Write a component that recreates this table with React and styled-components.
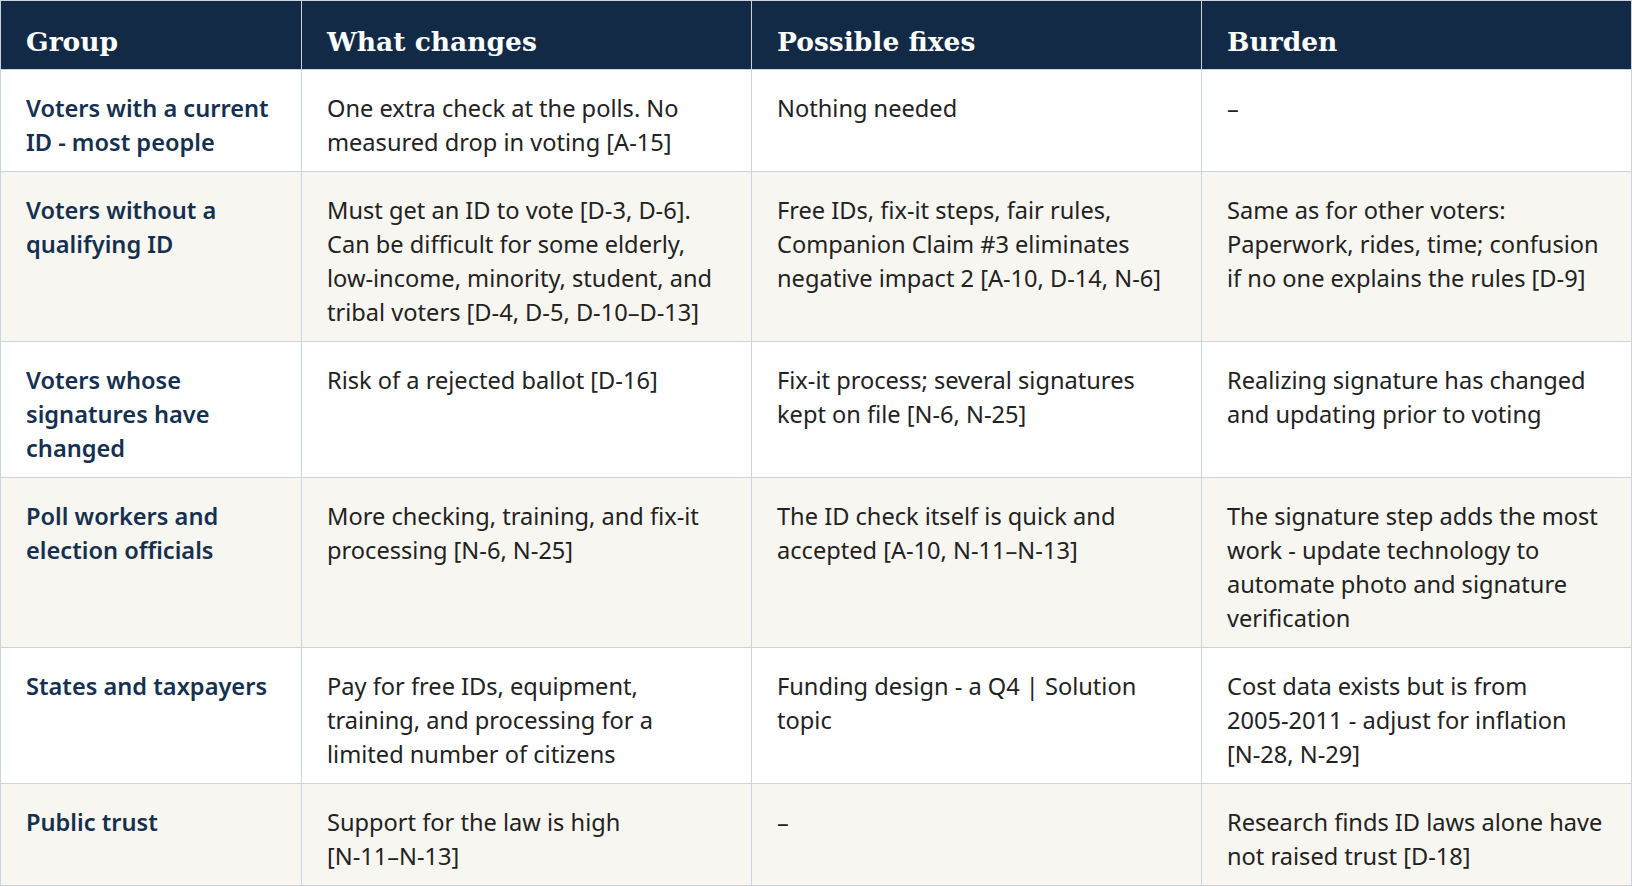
import React from "react";
import styled, { createGlobalStyle } from "styled-components";

const Global = createGlobalStyle`
  html, body { margin: 0; padding: 0; background: #ffffff; }
  body { font-family: "Noto Sans", "Open Sans", sans-serif; }
`;

const Table = styled.table`
  width: 1632px;
  border-collapse: collapse;
  table-layout: fixed;
  border: 1px solid #cbd3dd;
`;

const Th = styled.th`
  background: #122a45;
  color: #ffffff;
  font-family: "DejaVu Serif", "Liberation Serif", serif;
  font-weight: 700;
  font-size: 26.5px;
  line-height: 36px;
  text-align: left;
  padding: 23px 25px 9px;
  border: 1px solid #cbd3dd;
  border-bottom: none;
`;

const Row = styled.tr`
  background: ${(p) => (p.$alt ? "#f8f6f0" : "#ffffff")};
`;

const Td = styled.td`
  vertical-align: top;
  padding: 21px 25px 12px;
  border: 1px solid #cbd3dd;
  font-size: 23.6px;
  line-height: 34px;
  color: ${(p) => (p.$group ? "#15304f" : "#222222")};
  font-weight: ${(p) => (p.$group ? 600 : 400)};
`;

const NoWrap = styled.span`
  white-space: nowrap;
`;

const rows = [
  [
    "Voters with a current ID - most people",
    "One extra check at the polls. No measured drop in voting [A-15]",
    "Nothing needed",
    "–",
  ],
  [
    "Voters without a qualifying ID",
    "Must get an ID to vote [D-3, D-6]. Can be difficult for some elderly, low-income, minority, student, and tribal voters [D-4, D-5, D-10–D-13]",
    "Free IDs, fix-it steps, fair rules, Companion Claim #3 eliminates negative impact 2 [A-10, D-14, N-6]",
    "Same as for other voters: Paperwork, rides, time; confusion if no one explains the rules [D-9]",
  ],
  [
    "Voters whose signatures have changed",
    "Risk of a rejected ballot [D-16]",
    "Fix-it process; several signatures kept on file [N-6, N-25]",
    "Realizing signature has changed and updating prior to voting",
  ],
  [
    "Poll workers and election officials",
    "More checking, training, and fix-it processing [N-6, N-25]",
    "The ID check itself is quick and accepted [A-10, N-11–N-13]",
    "The signature step adds the most work - update technology to automate photo and signature verification",
  ],
  [
    "States and taxpayers",
    "Pay for free IDs, equipment, training, and processing for a limited number of citizens",
    "Funding design - a Q4 | Solution topic",
    <>Cost data exists but is from <NoWrap>2005-2011</NoWrap> - adjust for inflation <NoWrap>[N-28, N-29]</NoWrap></>,
  ],
  [
    "Public trust",
    <>Support for the law is high <NoWrap>[N-11–N-13]</NoWrap></>,
    "–",
    "Research finds ID laws alone have not raised trust [D-18]",
  ],
];

export default function App() {
  return (
    <>
      <Global />
      <Table>
        <colgroup>
          <col style={{ width: 301 }} />
          <col style={{ width: 450 }} />
          <col style={{ width: 450 }} />
          <col />
        </colgroup>
        <thead>
          <tr>
            <Th>Group</Th>
            <Th>What changes</Th>
            <Th>Possible fixes</Th>
            <Th>Burden</Th>
          </tr>
        </thead>
        <tbody>
          {rows.map((r, i) => (
            <Row key={i} $alt={i % 2 === 1}>
              <Td $group>{r[0]}</Td>
              <Td>{r[1]}</Td>
              <Td>{r[2]}</Td>
              <Td>{r[3]}</Td>
            </Row>
          ))}
        </tbody>
      </Table>
    </>
  );
}
